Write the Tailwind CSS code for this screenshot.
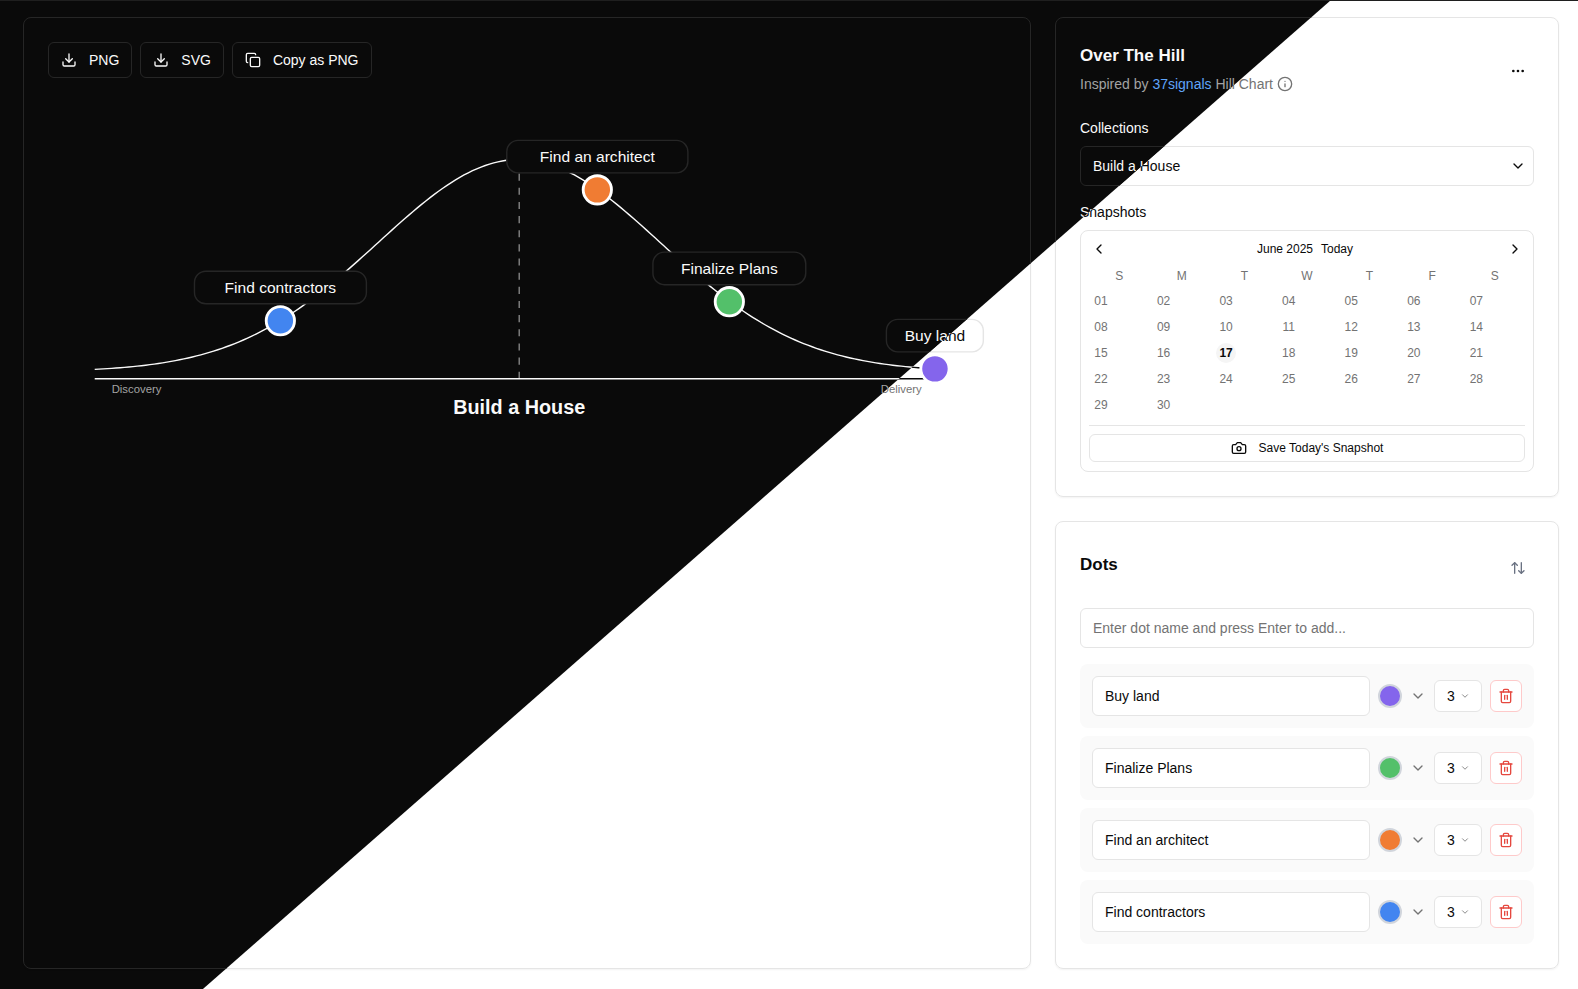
<!DOCTYPE html>
<html lang="en">
<head>
<meta charset="utf-8">
<meta name="viewport" content="width=device-width, initial-scale=1">
<title>Over The Hill</title>
<script src="https://cdn.jsdelivr.net/npm/@tailwindcss/browser@4"></script>
</head>
<body class="font-['Liberation_Sans',Arial,sans-serif] text-sm">

<svg class="hidden" aria-hidden="true">
  <defs>
    <symbol id="i-download" viewBox="0 0 24 24"><path d="M21 15v4a2 2 0 0 1-2 2H5a2 2 0 0 1-2-2v-4"/><path d="m7 10 5 5 5-5"/><path d="M12 15V3"/></symbol>
    <symbol id="i-copy" viewBox="0 0 24 24"><rect width="14" height="14" x="8" y="8" rx="2"/><path d="M4 16c-1.100 0-2-.9-2-2V4c0-1.100.9-2 2-2h10c1.100 0 2 .9 2 2"/></symbol>
    <symbol id="i-info" viewBox="0 0 24 24"><circle cx="12" cy="12" r="10"/><path d="M12 16v-4"/><path d="M12 8h.01"/></symbol>
    <symbol id="i-more" viewBox="0 0 24 24"><circle cx="12" cy="12" r="1"/><circle cx="19" cy="12" r="1"/><circle cx="5" cy="12" r="1"/></symbol>
    <symbol id="i-down" viewBox="0 0 24 24"><path d="m6 9 6 6 6-6"/></symbol>
    <symbol id="i-left" viewBox="0 0 24 24"><path d="m15 18-6-6 6-6"/></symbol>
    <symbol id="i-right" viewBox="0 0 24 24"><path d="m9 18 6-6-6-6"/></symbol>
    <symbol id="i-camera" viewBox="0 0 24 24"><path d="M14.500 4h-5L7 7H4a2 2 0 0 0-2 2v9a2 2 0 0 0 2 2h16a2 2 0 0 0 2-2V9a2 2 0 0 0-2-2h-3l-2.500-3z"/><circle cx="12" cy="13" r="3"/></symbol>
    <symbol id="i-sort" viewBox="0 0 24 24"><path d="m3 8 4-4 4 4"/><path d="M7 4v16"/><path d="m21 16-4 4-4-4"/><path d="M17 20V4"/></symbol>
    <symbol id="i-trash" viewBox="0 0 24 24"><path d="M3 6h18"/><path d="M19 6v14c0 1-1 2-2 2H7c-1 0-2-1-2-2V6"/><path d="M8 6V4c0-1 1-2 2-2h4c1 0 2 1 2 2v2"/><path d="M10 11v6"/><path d="M14 11v6"/></symbol>
  </defs>
</svg>

<div id="stage" class="relative min-h-screen">
  <div id="page" class="flex min-h-screen flex-col border-t border-[#1f1f1f] bg-[var(--bg)] pt-4 pr-[19px] pb-5 pl-[23px] text-[var(--fg)] [--bg:#ffffff] [--fg:#0a0a0a] [--line:#e5e5e5] [--muted:#737373] [--link:#2563eb] [--soft:#fafafa] [--today:#f5f5f5]">
    <div class="grid flex-1 grid-cols-[minmax(0,2fr)_minmax(0,1fr)] gap-6">

      <main class="rounded-lg border border-[var(--line)] p-6 shadow-xs">
        <div class="flex gap-2">
          <button type="button" class="flex h-9 items-center gap-3 rounded-md border border-[var(--line)] px-3"><svg class="size-4 fill-none stroke-current stroke-2 [stroke-linecap:round] [stroke-linejoin:round]"><use href="#i-download"/></svg>PNG</button>
          <button type="button" class="flex h-9 items-center gap-3 rounded-md border border-[var(--line)] px-3"><svg class="size-4 fill-none stroke-current stroke-2 [stroke-linecap:round] [stroke-linejoin:round]"><use href="#i-download"/></svg>SVG</button>
          <button type="button" class="flex h-9 items-center gap-3 rounded-md border border-[var(--line)] px-3"><svg class="size-4 fill-none stroke-current stroke-2 [stroke-linecap:round] [stroke-linejoin:round]"><use href="#i-copy"/></svg>Copy as PNG</button>
        </div>
        <!-- Chart units: the hill spans x 0–600, with its peak at y 0 and its foot at y 150 -->
        <svg class="mt-6 w-full" viewBox="-33 -40.600 677 230" role="img" aria-label="Build a House hill chart">
          <path data-hill class="fill-none stroke-[var(--fg)] stroke-1"/>
          <path d="M300 0V155" stroke-dasharray="5 5" class="stroke-[var(--fg)] stroke-1 opacity-50"/>
          <path d="M0 155H600" class="stroke-[var(--fg)] stroke-1"/>
          <g class="fill-[var(--muted)] text-[8px]">
            <text x="12" y="165">Discovery</text>
            <text x="555.500" y="165">Delivery</text>
          </g>
          <text x="300" y="180" text-anchor="middle" class="fill-[var(--fg)] text-[14px] font-bold">Build a House</text>
          <g class="stroke-white stroke-2">
            <circle cx="131.200" cy="114" r="10" class="fill-[#4285f0]"/>
            <circle cx="355.200" cy="21.500" r="10" class="fill-[#f07c33]"/>
            <circle cx="448.500" cy="100.500" r="10" class="fill-[#53c06a]"/>
            <circle cx="593.800" cy="148" r="10" class="fill-[#8465ec]"/>
          </g>
          <g class="fill-[var(--bg)] stroke-[var(--line)] stroke-1">
            <rect x="70.500" y="79" width="121.500" height="23" rx="8"/>
            <rect x="291.200" y="-13.500" width="128" height="23" rx="8"/>
            <rect x="394.500" y="65.500" width="108" height="23" rx="8"/>
            <rect x="559.500" y="113" width="68.500" height="23" rx="8"/>
          </g>
          <g text-anchor="middle" class="fill-[var(--fg)] text-[11px]">
            <text x="131.200" y="94.200">Find contractors</text>
            <text x="355.200" y="1.700">Find an architect</text>
            <text x="448.500" y="80.700">Finalize Plans</text>
            <text x="593.800" y="128.200">Buy land</text>
          </g>
        </svg>
      </main>

      <div class="flex flex-col gap-6">
        <section class="rounded-lg border border-[var(--line)] p-6 shadow-xs">
          <header class="mb-6 flex justify-between">
            <div>
              <h1 class="text-[17px] leading-7 font-bold">Over The Hill</h1>
              <p class="mt-1 flex h-5 items-center gap-1 text-[var(--muted)]"><span>Inspired by <a href="#" class="text-[var(--link)]">37signals</a> Hill Chart</span>
                <svg class="size-4 fill-none stroke-current stroke-2 [stroke-linecap:round] [stroke-linejoin:round]"><use href="#i-info"/></svg></p>
            </div>
            <button type="button" aria-label="More options" class="flex h-[46px] w-8 items-center justify-center self-end"><svg class="size-4 fill-none stroke-current stroke-2 [stroke-linecap:round] [stroke-linejoin:round]"><use href="#i-more"/></svg></button>
          </header>

          <label for="collection" class="block leading-5">Collections</label>
          <div class="relative mt-2">
            <select id="collection" class="h-10 w-full appearance-none rounded-md border border-[var(--line)] bg-[var(--bg)] px-3"><option>Build a House</option></select>
            <svg class="pointer-events-none absolute top-3 right-2 size-4 fill-none stroke-current stroke-2 [stroke-linecap:round] [stroke-linejoin:round]"><use href="#i-down"/></svg>
          </div>

          <h2 class="mt-4 leading-5">Snapshots</h2>
          <div class="mt-2 rounded-lg border border-[var(--line)] px-2 pt-2 pb-[9px] text-xs">
            <div class="flex h-5 items-center justify-between">
              <button type="button" aria-label="Previous month" class="flex size-5 items-center justify-center"><svg class="size-4 fill-none stroke-current stroke-2 [stroke-linecap:round] [stroke-linejoin:round]"><use href="#i-left"/></svg></button>
              <div class="flex gap-2 pr-1"><span>June 2025</span><button type="button">Today</button></div>
              <button type="button" aria-label="Next month" class="flex size-5 items-center justify-center"><svg class="size-4 fill-none stroke-current stroke-2 [stroke-linecap:round] [stroke-linejoin:round]"><use href="#i-right"/></svg></button>
            </div>
            <div class="-mx-px mt-2">
              <table class="w-full table-fixed text-[var(--muted)]">
                <thead><tr class="h-[21px]"><th class="p-0 pb-[3px] font-normal">S</th><th class="p-0 pb-[3px] font-normal">M</th><th class="p-0 pb-[3px] font-normal">T</th><th class="p-0 pb-[3px] font-normal">W</th><th class="p-0 pb-[3px] font-normal">T</th><th class="p-0 pb-[3px] font-normal">F</th><th class="p-0 pb-[3px] font-normal">S</th></tr></thead>
                <tbody data-days></tbody>
              </table>
            </div>
            <div class="mt-[7px] border-t border-[var(--line)] pt-2">
              <button type="button" class="flex h-7 w-full items-center justify-center gap-3 rounded-md border border-[var(--line)]"><svg class="size-4 fill-none stroke-current stroke-2 [stroke-linecap:round] [stroke-linejoin:round]"><use href="#i-camera"/></svg>Save Today's Snapshot</button>
            </div>
          </div>
        </section>

        <section class="flex-1 rounded-lg border border-[var(--line)] p-6 shadow-xs">
          <header class="mb-6 flex h-[38px] items-center justify-between">
            <h2 class="text-[17px] leading-7 font-bold">Dots</h2>
            <button type="button" aria-label="Sort dots" class="flex size-8 items-center justify-center self-end text-gray-500"><svg class="size-4 fill-none stroke-current stroke-2 [stroke-linecap:round] [stroke-linejoin:round]"><use href="#i-sort"/></svg></button>
          </header>
          <input type="text" aria-label="New dot name" placeholder="Enter dot name and press Enter to add..." class="h-10 w-full rounded-md border border-[var(--line)] bg-[var(--bg)] px-3 placeholder:text-[var(--muted)]">
          <ul data-dots class="mt-4 flex flex-col gap-2"></ul>
        </section>
      </div>
    </div>
  </div>
</div>

<script>
  const page = document.getElementById('page');

  // Hill outline: a bell curve centred on x = 300.
  let d = '';
  for (let x = 0; x <= 600; x += 3) {
    const y = 150 - 150 * Math.exp(-((x - 300) ** 2) / 20000);
    d += (d ? 'L' : 'M') + x + ' ' + y.toFixed(2);
  }
  page.querySelector('[data-hill]').setAttribute('d', d);

  // June 2025 starts on a Sunday.
  let rows = '';
  for (let week = 0; week < 5; week++) {
    rows += '<tr class="h-[26px]">';
    for (let day = week * 7 + 1; day <= week * 7 + 7; day++) {
      const look = day === 17 ? 'bg-[var(--today)] font-bold text-[var(--fg)]' : '';
      rows += day > 30 ? '<td></td>' : `<td class="p-0 pl-[3px]"><button type="button" class="flex size-5 items-center justify-center rounded-full ${look}">${String(day).padStart(2, '0')}</button></td>`;
    }
    rows += '</tr>';
  }
  page.querySelector('[data-days]').innerHTML = rows;

  const dots = [['Buy land', 'bg-[#8465ec]'], ['Finalize Plans', 'bg-[#53c06a]'], ['Find an architect', 'bg-[#f07c33]'], ['Find contractors', 'bg-[#4285f0]']];
  page.querySelector('[data-dots]').innerHTML = dots.map(([name, fill]) => `
    <li class="flex items-center gap-2 rounded-lg bg-[var(--soft)] p-3">
      <input type="text" aria-label="Dot name" value="${name}" class="h-10 min-w-0 flex-1 rounded-md border border-[var(--line)] bg-[var(--bg)] px-3">
      <button type="button" aria-label="Colour of ${name}" class="flex items-center gap-2 text-[var(--muted)]">
        <span class="size-6 rounded-full border-2 border-gray-300 ${fill}"></span>
        <svg class="size-4 fill-none stroke-current stroke-2 [stroke-linecap:round] [stroke-linejoin:round]"><use href="#i-down"/></svg>
      </button>
      <div class="relative">
        <select aria-label="Size of ${name}" class="h-8 w-12 appearance-none rounded-md border border-[var(--line)] bg-[var(--bg)] pl-3"><option>3</option></select>
        <svg class="pointer-events-none absolute top-[11px] right-3 size-2.5 fill-none stroke-[var(--muted)] stroke-2 [stroke-linecap:round] [stroke-linejoin:round]"><use href="#i-down"/></svg>
      </div>
      <button type="button" aria-label="Delete ${name}" class="flex size-8 items-center justify-center rounded-md border border-[#fecaca] bg-[var(--bg)] text-[#e5483f]"><svg class="size-4 fill-none stroke-current stroke-2 [stroke-linecap:round] [stroke-linejoin:round]"><use href="#i-trash"/></svg></button>
    </li>`).join('');

  // Dark theme preview, laid over the light page and cut along the diagonal.
  const dark = document.createElement('div');
  dark.className = 'absolute inset-0 [clip-path:polygon(0_0,84.35%_0,12.86%_100%,0_100%)]';
  dark.setAttribute('aria-hidden', 'true');
  dark.inert = true;
  const copy = page.cloneNode(true);
  copy.removeAttribute('id');
  copy.querySelectorAll('[id]').forEach(el => el.removeAttribute('id'));
  copy.className = 'flex min-h-screen flex-col border-t border-[#1f1f1f] bg-[var(--bg)] pt-4 pr-[19px] pb-5 pl-[23px] text-[var(--fg)] [--bg:#0a0a0a] [--fg:#fafafa] [--line:#262626] [--muted:#a3a3a3] [--link:#60a5fa] [--soft:#171717] [--today:#262626]';
  dark.append(copy);
  document.getElementById('stage').append(dark);
</script>
</body>
</html>
